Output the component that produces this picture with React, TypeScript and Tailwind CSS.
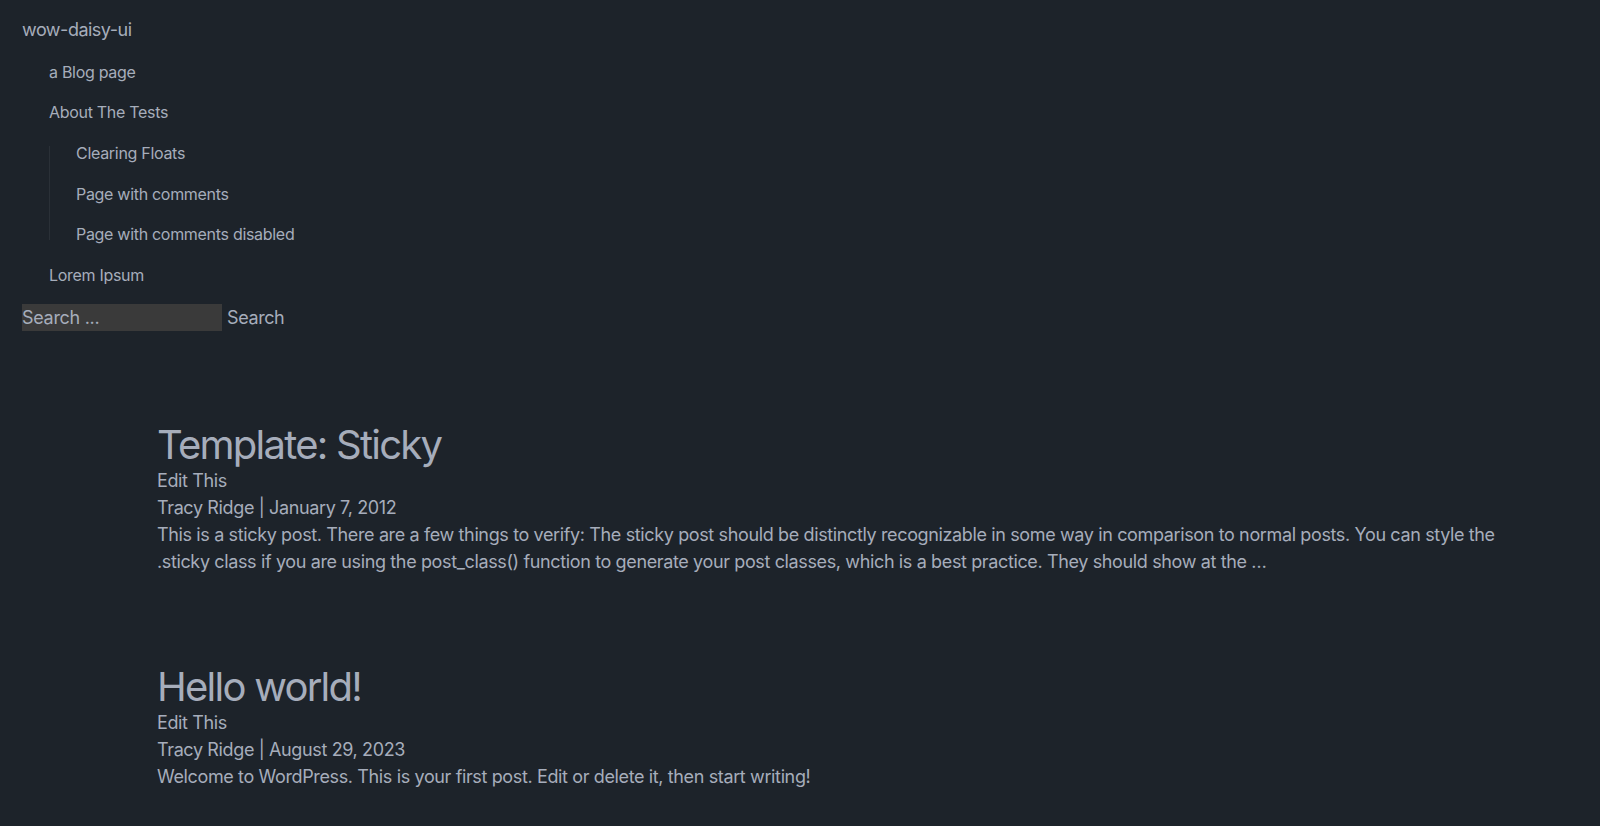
import React from "react";

const font = { fontFamily: "Inter, 'Noto Sans', sans-serif" };

function NavItem({ children }: { children: React.ReactNode }) {
  return (
    <li className="h-[40.6px] flex items-center pt-[1px] text-[16px] leading-[20px] tracking-[-0.3px]">{children}</li>
  );
}

export default function App() {
  return (
    <div className="min-h-[826px] w-full bg-[#1d232a] text-[#a6adbb]" style={font}>
      <header className="px-[22px]">
        <div className="h-[51px] flex items-center pt-[8px] text-[18px] leading-[24px] tracking-[-0.5px]">wow-daisy-ui</div>
        <ul className="pl-[49px] -ml-[22px]">
          <NavItem>a Blog page</NavItem>
          <NavItem>About The Tests</NavItem>
          <li>
            <ul className="relative pl-[27px] before:absolute before:left-0 before:top-[14px] before:bottom-[14px] before:w-px before:bg-[#2a3037]">
              <NavItem>Clearing Floats</NavItem>
              <NavItem>Page with comments</NavItem>
              <NavItem>Page with comments disabled</NavItem>
            </ul>
          </li>
          <NavItem>Lorem Ipsum</NavItem>
        </ul>
        <form className="mt-[9px] flex items-center gap-[5px]" onSubmit={(e) => e.preventDefault()}>
          <input
            type="search"
            placeholder="Search ..."
            className="h-[27px] w-[200px] bg-[#3a3a3a] text-[18px] leading-[27px] tracking-[-0.3px] text-[#a6adbb] placeholder:text-[#a6adbb] outline-none"
            style={font}
          />
          <button type="submit" className="text-[18px] leading-[27px] tracking-[-0.4px] text-[#a6adbb]" style={font}>
            Search
          </button>
        </form>
      </header>
      <main className="pl-[157px] pr-[80px] pb-[40px]">
        <article className="pt-[94px]">
          <h2 className="mb-[2px] text-[40px] leading-[40px] tracking-[-1.75px]">Template: Sticky</h2>
          <div className="text-[18px] leading-[27px] tracking-[-0.37px]">
            <div>Edit This</div>
            <div>Tracy Ridge | January 7, 2012</div>
            <p>
              This is a sticky post. There are a few things to verify: The sticky post should be distinctly recognizable in some way in comparison to normal posts. You can style the .sticky class if you are using the post_class() function to generate your post classes, which is a best practice. They should show at the …
            </p>
          </div>
        </article>
        <article className="pt-[92px]">
          <h2 className="mb-[2px] text-[40px] leading-[40px] tracking-[-1.75px]">Hello world!</h2>
          <div className="text-[18px] leading-[27px] tracking-[-0.37px]">
            <div>Edit This</div>
            <div>Tracy Ridge | August 29, 2023</div>
            <p>Welcome to WordPress. This is your first post. Edit or delete it, then start writing!</p>
          </div>
        </article>
      </main>
    </div>
  );
}
